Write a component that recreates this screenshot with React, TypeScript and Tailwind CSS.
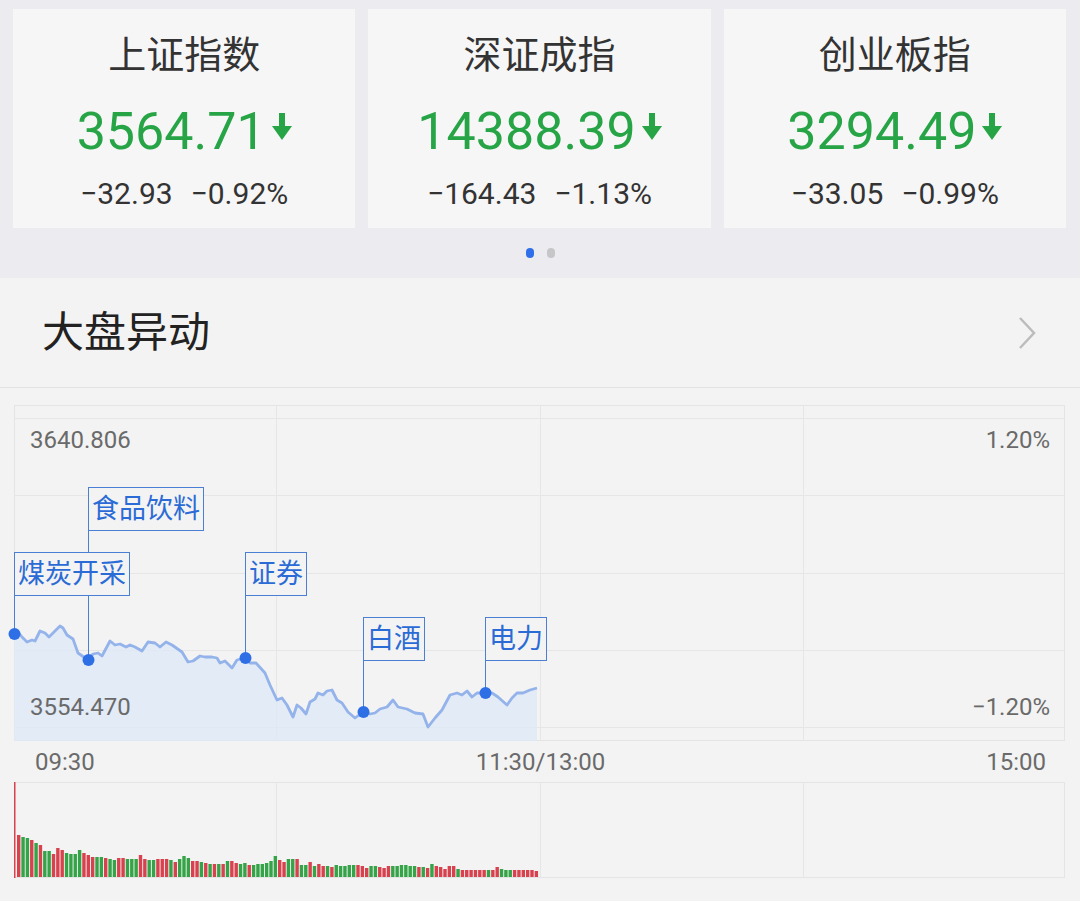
import React from 'react';

type IndexQuote = {
  name: string;
  value: string;
  change: string;
  percent: string;
};

const quotes: IndexQuote[] = [
  { name: '上证指数', value: '3564.71', change: '−32.93', percent: '−0.92%' },
  { name: '深证成指', value: '14388.39', change: '−164.43', percent: '−1.13%' },
  { name: '创业板指', value: '3294.49', change: '−33.05', percent: '−0.99%' },
];

// price line, in chart coordinates (box is 1051 x 336)
const linePoints =
  '0,229 4,227 8,232 13,237 18,235 21,236 26,226 31,228 35,232 41,226 46,221 49,223 53,230 59,234 64,248 74,255 79,249 84,248 88,251 96,236 101,240 106,239 112,242 116,240 121,242 128,246 134,237 141,238 146,242 152,237 158,240 168,247 174,257 179,256 186,251 191,252 198,252 203,253 206,258 211,256 218,263 223,255 231,253 236,258 242,258 251,268 256,280 263,295 268,293 273,300 279,312 283,300 287,303 292,309 296,297 301,294 304,288 309,290 313,286 318,285 323,295 328,298 334,307 341,313 349,307 356,309 361,308 366,304 373,302 379,295 384,302 393,304 401,308 409,309 414,322 421,313 428,305 436,290 443,288 448,290 453,286 458,292 463,288 471,288 478,288 484,292 493,300 498,293 503,288 509,288 516,285 523,283';

const notes = [
  { label: '煤炭开采', box: 'left-[0px] top-[147px]', x: 0, top: 191, dot: 229 },
  { label: '食品饮料', box: 'left-[74px] top-[82px]', x: 74, top: 126, dot: 255 },
  { label: '证券', box: 'left-[231px] top-[147px]', x: 231, top: 191, dot: 253 },
  { label: '白酒', box: 'left-[349px] top-[212px]', x: 349, top: 256, dot: 307 },
  { label: '电力', box: 'left-[471px] top-[212px]', x: 471, top: 256, dot: 288 },
];

// minute volume bars, height + r(ed)/g(reen)
const volumeData =
  '42r 40g 39g 37r 34g 32r 26g 26g 23r 29r 27r 24g 23g 23g 27g 24r 22r 20r 20g 20g 19r 18g 17g 19r 19r 18g 18g 18g 22r 18r 17g 17g 18r 18r 18r 17g 15r 18g 21g 19g 16r 16r 15g 14r 13g 13r 13g 13r 16g 16r 14r 13g 14g 12r 12g 13g 13g 14g 16g 21g 17r 15r 18g 18g 18r 12g 12g 15r 11g 13r 11r 11g 10r 12g 11g 11g 12g 12g 12r 11r 9r 11g 11g 10r 9r 11r 11g 11g 12g 12g 11g 11g 10r 10g 9r 13g 11r 10r 8r 11r 11r 8g 7r 7r 7r 7r 7r 7r 7g 7r 10r 8g 7g 7g 7r 7r 7r 7r 7r 6r'
    .split(' ')
    .map((s) => ({ h: parseInt(s, 10), red: s.endsWith('r') }));

const gridX = [262, 526, 789];
const gridY = [13, 90, 168, 245, 322];

function DownArrow() {
  return (
    <svg width="20" height="27" viewBox="0 0 20 27" className="mt-[11px] ml-[6px] shrink-0">
      <rect x="7" y="0" width="6" height="15" fill="#27a546" />
      <polygon points="0,13 20,13 10,27" fill="#27a546" />
    </svg>
  );
}

function IndexCard({ quote }: { quote: IndexQuote }) {
  return (
    <div className="flex h-[219px] flex-col items-center bg-[#f6f6f6]">
      <div className="mt-[23px] text-[38px] leading-[46px] text-[#333333]">{quote.name}</div>
      <div className="mt-[24px] flex items-start">
        <span className="text-[52px] leading-[60px] text-[#27a546]">{quote.value}</span>
        <DownArrow />
      </div>
      <div className="mt-[14px] flex gap-[18px] text-[30px] leading-[36px] text-[#333333]">
        <span>{quote.change}</span>
        <span>{quote.percent}</span>
      </div>
    </div>
  );
}

function PriceChart() {
  return (
    <div className="relative h-[336px] w-[1051px]">
      <svg className="absolute inset-0 overflow-visible" width="1051" height="336" viewBox="0 0 1051 336">
        <rect x="0.5" y="0.5" width="1050" height="335" fill="none" stroke="#e4e4e4" />
        {gridY.map((y) => (
          <line key={y} x1="0" x2="1051" y1={y + 0.5} y2={y + 0.5} stroke="#e6e6e6" />
        ))}
        {gridX.map((x) => (
          <line key={x} x1={x + 0.5} x2={x + 0.5} y1="0" y2="336" stroke="#e6e6e6" />
        ))}
        <polygon points={`${linePoints} 523,336 0,336`} fill="#dfe8f8" fillOpacity="0.8" />
        <polyline points={linePoints} fill="none" stroke="#93b3ea" strokeWidth="2.8" strokeLinejoin="round" />
        {notes.map((n) => (
          <g key={n.label}>
            <line x1={n.x + 0.5} x2={n.x + 0.5} y1={n.top} y2={n.dot} stroke="#4b7fd4" strokeWidth="1" />
            <circle cx={n.x + 0.5} cy={n.dot} r="6" fill="#2f6fe6" />
          </g>
        ))}
      </svg>
      <div className="absolute left-[16px] top-[22px] text-[24px] leading-[26px] text-[#6a6a6a]">3640.806</div>
      <div className="absolute right-[15px] top-[22px] text-[24px] leading-[26px] text-[#6a6a6a]">1.20%</div>
      <div className="absolute left-[16px] top-[289px] text-[24px] leading-[26px] text-[#6a6a6a]">3554.470</div>
      <div className="absolute right-[15px] top-[289px] text-[24px] leading-[26px] text-[#6a6a6a]">−1.20%</div>
      {notes.map((n) => (
        <div
          key={n.label}
          className={`absolute ${n.box} h-[44px] border border-[#4b7fd4] bg-[#f3f3f3] px-[3px] text-[27px] leading-[42px] text-[#2b6bd6]`}
        >
          {n.label}
        </div>
      ))}
    </div>
  );
}

function VolumeChart() {
  return (
    <svg width="1051" height="96" viewBox="0 0 1051 96" className="block overflow-visible">
      <rect x="0.5" y="0.5" width="1050" height="95" fill="none" stroke="#e4e4e4" />
      {gridX.map((x) => (
        <line key={x} x1={x + 0.5} x2={x + 0.5} y1="0" y2="96" stroke="#e6e6e6" />
      ))}
      <rect x="0" y="0" width="1.5" height="96" fill="#d8424f" />
      {volumeData.map((b, i) => (
        <rect
          key={i}
          x={3 + i * 4.35}
          y={95 - b.h}
          width="3.4"
          height={b.h}
          fill={b.red ? '#d8424f' : '#35a347'}
        />
      ))}
    </svg>
  );
}

export default function App() {
  return (
    <div className="h-[901px] w-[1080px] overflow-hidden bg-[#f3f3f3] font-[Roboto,'Noto_Sans_CJK_SC',sans-serif]">
      <section className="h-[278px] bg-[#ebebf0] pt-[9px]">
        <div className="grid grid-cols-3 gap-[13px] pl-[13px] pr-[14px]">
          {quotes.map((q) => (
            <IndexCard key={q.name} quote={q} />
          ))}
        </div>
        <div className="mt-[20px] flex justify-center gap-[13px]">
          <span className="h-[10px] w-[8px] rounded-full bg-[#2f70ea]" />
          <span className="h-[10px] w-[8px] rounded-full bg-[#c6c6c8]" />
        </div>
      </section>

      <header className="flex h-[110px] items-center justify-between border-b border-[#e2e2e2] pl-[42px] pr-[42px]">
        <h2 className="text-[42px] leading-[48px] text-[#222222]">大盘异动</h2>
        <svg width="22" height="36" viewBox="0 0 22 36">
          <polyline points="4,3 18,18 4,33" fill="none" stroke="#bcbcbc" strokeWidth="2.5" />
        </svg>
      </header>

      <div className="ml-[14px] mt-[17px] w-[1051px]">
        <PriceChart />
        <div className="flex h-[41px] items-center justify-between pl-[21px] pr-[19px] text-[24px] leading-[28px] text-[#6a6a6a]">
          <span>09:30</span>
          <span>11:30/13:00</span>
          <span>15:00</span>
        </div>
        <VolumeChart />
      </div>
    </div>
  );
}
